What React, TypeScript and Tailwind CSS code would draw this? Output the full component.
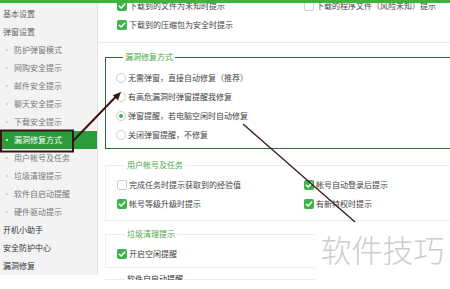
import React from "react";

const Check = ({ on }: { on: boolean }) =>
  on ? (
    <span className="w-[10px] h-[10px] rounded-[2px] bg-[#3cb44a] flex items-center justify-center shrink-0">
      <svg width="8" height="8" viewBox="0 0 8 8">
        <path d="M1.3 4.2 L3.2 6 L6.8 2" stroke="#fff" strokeWidth="1.5" fill="none" strokeLinecap="round" strokeLinejoin="round" />
      </svg>
    </span>
  ) : (
    <span className="w-[10px] h-[10px] rounded-[2px] border border-[#cfcfcf] bg-white shrink-0" />
  );

const Radio = ({ on }: { on: boolean }) => (
  <span className="w-[10px] h-[10px] rounded-full border border-[#d0d0d0] bg-white flex items-center justify-center shrink-0">
    {on && <span className="w-[4px] h-[4px] rounded-full bg-[#3cb44a]" />}
  </span>
);

const CRow = ({ on, text }: { on: boolean; text: string }) => (
  <div className="h-[19px] flex items-center gap-[2px] whitespace-nowrap">
    <Check on={on} />
    <span className="text-[8px] text-[#444]">{text}</span>
  </div>
);

const RRow = ({ on, text }: { on: boolean; text: string }) => (
  <div className="h-[19px] flex items-center gap-[2px] whitespace-nowrap">
    <Radio on={on} />
    <span className="text-[8px] text-[#444]">{text}</span>
  </div>
);

const side: { t: string; k: "h" | "s" | "sel" | "m" }[] = [
  { t: "基本设置", k: "h" },
  { t: "弹窗设置", k: "h" },
  { t: "防护弹窗模式", k: "s" },
  { t: "网购安全提示", k: "s" },
  { t: "邮件安全提示", k: "s" },
  { t: "聊天安全提示", k: "s" },
  { t: "下载安全提示", k: "s" },
  { t: "漏洞修复方式", k: "sel" },
  { t: "用户帐号及任务", k: "s" },
  { t: "垃圾清理提示", k: "s" },
  { t: "软件自启动提醒", k: "s" },
  { t: "硬件驱动提示", k: "s" },
  { t: "开机小助手", k: "m" },
  { t: "安全防护中心", k: "m" },
  { t: "漏洞修复", k: "m" },
];

export default function App() {
  return (
    <div className="w-[450px] h-[289px] bg-white relative overflow-hidden font-['Noto_Sans_CJK_SC',sans-serif]">
      <div className="h-[3px] bg-[#3cb43c]" />
      <div className="flex h-[277px] overflow-hidden">
        <aside className="w-[98px] h-[272px] shrink-0 bg-[#f3f3f3] border-r border-[#e4e4e4] pt-[2px]">
          {side.map((s) => (
            <div
              key={s.t}
              className={
                s.k === "sel"
                  ? "h-[18px] flex items-center bg-[#2c9b3c] text-white pl-[6px] gap-[6px] text-[8px]"
                  : s.k === "s"
                  ? "h-[18px] flex items-center text-[#777] pl-[6px] gap-[6px] text-[8px]"
                  : s.k === "h"
                  ? "h-[18px] flex items-center text-[#666] pl-[3px] text-[8px]"
                  : "h-[18px] flex items-center text-[#333] pl-[3px] text-[8px]"
              }
            >
              {s.k === "sel" && <span className="w-[2px] h-[2px] rounded-full bg-white" />}
              {s.k === "s" && <span className="w-[2px] h-[2px] rounded-full bg-[#c8c8c8]" />}
              <span>{s.t}</span>
            </div>
          ))}
        </aside>
        <main className="flex-1 flex flex-col overflow-hidden min-w-0">
          <section className="border-b border-[#e8e8e8] pb-[8px] pl-[19px] grid grid-cols-[187px_1fr]">
            <div className="mt-[-7px]">
              <CRow on text="下载到的文件为未知时提示" />
              <CRow on text="下载到的压缩包为安全时提示" />
            </div>
            <div className="mt-[-7px]">
              <CRow on={false} text="下载的程序文件（风险未知）提示" />
            </div>
          </section>
          <fieldset className="border border-[#2f6b3a] ml-[7px] mr-[-10px] mt-[8px] pl-[10px] pt-[5px] pb-[4px]">
            <legend className="ml-[7px] px-[2px] text-[8px] leading-[12px] text-[#4aa84a]">漏洞修复方式</legend>
            <RRow on={false} text="无需弹窗，直接自动修复（推荐）" />
            <RRow on={false} text="有高危漏洞时弹窗提醒我修复" />
            <RRow on text="弹窗提醒，若电脑空闲时自动修复" />
            <RRow on={false} text="关闭弹窗提醒，不修复" />
          </fieldset>
          <fieldset className="border border-[#ededed] ml-[7px] mr-[-10px] mt-[10px] pl-[11px] pt-[4px] pb-[7px] grid grid-cols-[187px_1fr]">
            <legend className="ml-[8px] px-[2px] text-[8px] leading-[12px] text-[#4aa84a]">用户帐号及任务</legend>
            <div>
              <CRow on={false} text="完成任务时提示获取到的经验值" />
              <CRow on text="帐号等级升级时提示" />
            </div>
            <div>
              <CRow on text="帐号自动登录后提示" />
              <CRow on text="有新特权时提示" />
            </div>
          </fieldset>
          <fieldset className="border border-[#ededed] ml-[7px] mr-[-10px] mt-[7px] pl-[11px] pt-[4px] pb-[4px]">
            <legend className="ml-[8px] px-[2px] text-[8px] leading-[12px] text-[#4aa84a]">垃圾清理提示</legend>
            <CRow on text="开启空闲提醒" />
          </fieldset>
          <fieldset className="border border-[#ededed] ml-[7px] mr-[-10px] mt-[5px] pl-[11px] pt-[4px] pb-[4px]">
            <legend className="ml-[8px] px-[2px] text-[8px] leading-[12px] text-[#333]">软件自启动提醒</legend>
            <CRow on text="开启提醒" />
          </fieldset>
        </main>
      </div>

      <div className="absolute left-[315px] top-[225px] w-[135px] h-[64px] bg-white flex items-start justify-center pt-[4px]">
        <span className="text-[31px] leading-[40px] text-[#cdcdcd] font-['Noto_Sans_CJK_SC',sans-serif] font-light">软件技巧</span>
      </div>

      <svg className="absolute inset-0 pointer-events-none" width="450" height="289">
        <rect x="1" y="130.5" width="72" height="21" fill="none" stroke="#3a1410" strokeWidth="2" />
        <line x1="73" y1="141" x2="116" y2="96.5" stroke="#3a1410" strokeWidth="2" />
        <polygon points="121,92 117.9,100.2 112.9,95.3" fill="#3a1410" />
        <line x1="243" y1="124" x2="355" y2="222" stroke="#3a1a1a" strokeWidth="1.3" />
      </svg>
    </div>
  );
}
